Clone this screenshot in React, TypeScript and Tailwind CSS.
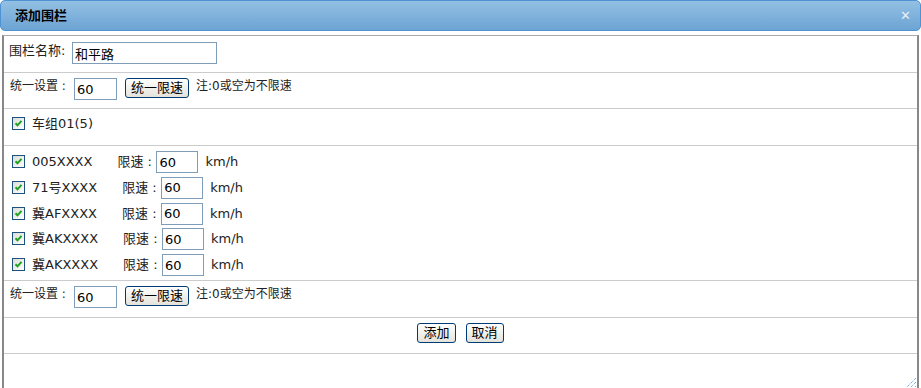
const font = "font-['DejaVu_Sans','Noto_Sans_CJK_SC',sans-serif]";

function Check() {
  return (
    <span className="inline-flex h-[13px] w-[13px] shrink-0 items-center justify-center border border-[#1c5180] bg-gradient-to-br from-[#dcdcd7] to-white">
      <svg width="9" height="9" viewBox="0 0 9 9">
        <path d="M1.5 4.2 L3.5 6.3 L7.5 1.8" fill="none" stroke="#21a121" strokeWidth="2" />
      </svg>
    </span>
  );
}

function Input({ value, w }: { value: string; w: string }) {
  return (
    <input
      readOnly
      value={value}
      className={`h-[22px] ${w} border border-[#7f9db9] bg-white px-[2px] text-[13px] text-black outline-none ${font}`}
    />
  );
}

function Btn({ label }: { label: string }) {
  return (
    <button className="h-[20px] rounded-[3px] border border-[#003c74] bg-gradient-to-b from-white to-[#e3e2da] px-[5px] text-[13px] leading-[16px] text-black">
      {label}
    </button>
  );
}

function Uniform({ h }: { h: string }) {
  return (
    <div className={`flex ${h} items-start border-b border-[#cccccc] pl-[6px] pt-[5px]`}>
      <span className="mt-[-1px] w-[64px]">统一设置 :</span>
      <Input value="60" w="w-[43px]" />
      <span className="ml-[8px]"><Btn label="统一限速" /></span>
      <span className="ml-[7px] mt-[-1px]">注:0或空为不限速</span>
    </div>
  );
}

const cars = ["005XXXX", "71号XXXX", "冀AFXXXX", "冀AKXXXX", "冀AKXXXX"];

export default function App() {
  return (
    <div className={`h-[388px] w-[921px] overflow-hidden bg-white text-[12px] text-[#222] ${font}`}>
      <div className="relative flex h-[31px] items-center overflow-hidden rounded-[5px] border border-[#4d93d4] bg-gradient-to-b from-[#93c0e3] via-[#80b2dc] to-[#6ca4d3] pl-[14px]">
        <span className="text-[13px] font-bold text-black">添加围栏</span>
        <span className="ml-auto mr-[9px] text-[13px] font-bold leading-none text-[#e8eef5]">✕</span>
      </div>
      <div className="relative mx-[2px] mt-[4px] h-[353px] border-l-2 border-r-2 border-t border-l-[#888] border-r-[#888] border-t-[#aaa]">
        <div className="flex h-[37px] items-start border-b border-[#cccccc] pl-[5px] pt-[6px]">
          <span className="mt-[-1px] w-[63px] text-[13px]">围栏名称:</span>
          <Input value="和平路" w="w-[145px]" />
        </div>
        <Uniform h="h-[36px]" />
        <div className="flex h-[37px] items-start gap-[7px] border-b border-[#cccccc] pl-[8px] pt-[8px]">
          <Check />
          <span className="mt-[-3px] text-[13px]">车组01(5)</span>
        </div>
        <div className="flex h-[135px] flex-col border-b border-[#cccccc] pl-[8px] pt-[5px]">
          {cars.map((c, i) => (
            <div key={i} className="flex h-[26px] items-start">
              <span className="mt-[2px]"><Check /></span>
              <span className="ml-[7px] mt-[1px] text-[13px]">{c}</span>
              <span className="ml-[25px] mt-[1px] w-[39px] text-[13px]">限速 :</span>
              <Input value="60" w="w-[42px]" />
              <span className="ml-[7px] mt-[1px] text-[13px]">km/h</span>
            </div>
          ))}
        </div>
        <Uniform h="h-[37px]" />
        <div className="flex h-[36px] justify-center gap-[10px] border-b border-[#cccccc] pt-[5px]">
          <Btn label="添加" />
          <Btn label="取消" />
        </div>
        <svg className="absolute bottom-[0px] right-[0px]" width="12" height="12" viewBox="0 0 12 12">
          <path d="M11 2 L2 11 M11 6 L6 11 M11 10 L10 11" stroke="#3d8ee0" strokeWidth="1" strokeDasharray="1 1" />
        </svg>
      </div>
    </div>
  );
}
